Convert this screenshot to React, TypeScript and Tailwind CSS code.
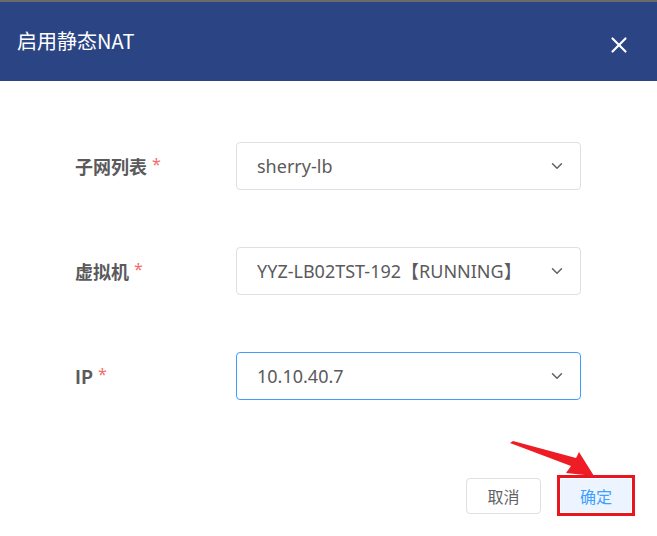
import { X, ChevronDown } from 'lucide-react';

const fields = [
  { label: '子网列表', value: 'sherry-lb', focused: false },
  { label: '虚拟机', value: 'YYZ-LB02TST-192【RUNNING】', focused: false },
  { label: 'IP', value: '10.10.40.7', focused: true },
];

export default function App() {
  return (
    <div
      className="relative w-[657px] h-[536px] bg-white overflow-hidden"
      style={{ fontFamily: '"Noto Sans", "Noto Sans CJK SC", sans-serif' }}
    >
      {/* Header */}
      <div className="h-[2px] bg-[#6b6b6b]" />
      <div className="h-[79px] bg-[#2b4584] flex items-center justify-between pl-[17px] pr-[25px]">
        <h2 className="text-white text-[20px] leading-none -mt-[1px]" style={{ fontFamily: '"Noto Sans CJK SC", sans-serif' }}>
          启用静态NAT
        </h2>
        <X className="w-[26px] h-[26px] text-white mt-[6px]" strokeWidth={2} />
      </div>

      {/* Form */}
      <div className="pt-[61px] pl-[75px] flex flex-col gap-[57px]">
        {fields.map((f) => (
          <div key={f.label} className="flex items-center">
            <div className="w-[161px] flex items-center gap-[5px] text-[18px] font-bold text-[#5a5a5c]">
              <span style={{ fontFamily: '"Noto Sans CJK SC", sans-serif' }}>{f.label}</span>
              <span className="text-[#f56c6c] font-normal text-[16px] -mt-[4px]">*</span>
            </div>
            <div
              className={`w-[345px] h-[48px] rounded-[4px] border flex items-center justify-between pl-[20px] pr-[14px] ${
                f.focused ? 'border-[#409eff]' : 'border-[#dcdfe6]'
              }`}
            >
              <span className="text-[18px] text-[#5a5a5c] whitespace-nowrap overflow-hidden" style={{ fontFamily: '"Noto Sans", "Noto Sans CJK SC", sans-serif' }}>
                {f.value}
              </span>
              <ChevronDown className="w-[18px] h-[18px] text-[#606266] shrink-0" strokeWidth={2} />
            </div>
          </div>
        ))}
      </div>

      {/* Footer */}
      <div className="flex justify-end items-center gap-[16px] pr-[22px] mt-[75px]">
        <button className="w-[75px] h-[36px] rounded-[4px] border border-[#dcdfe6] bg-white text-[16px] text-[#606266]" style={{ fontFamily: '"Noto Sans CJK SC", sans-serif' }}>
          取消
        </button>
        <div className="border-[3px] border-[#e8161f] p-[1px]">
          <button className="w-[70px] h-[33px] bg-[#ecf5ff] text-[16px] text-[#409eff]" style={{ fontFamily: '"Noto Sans CJK SC", sans-serif' }}>
            确定
          </button>
        </div>
      </div>

      {/* Annotation arrow */}
      <svg className="absolute left-0 top-0 pointer-events-none" width="657" height="536">
        <polygon points="510,443 513,441 576,458 579,452 594,476 566,473 571,466" fill="#ee1c25" />
      </svg>
    </div>
  );
}
